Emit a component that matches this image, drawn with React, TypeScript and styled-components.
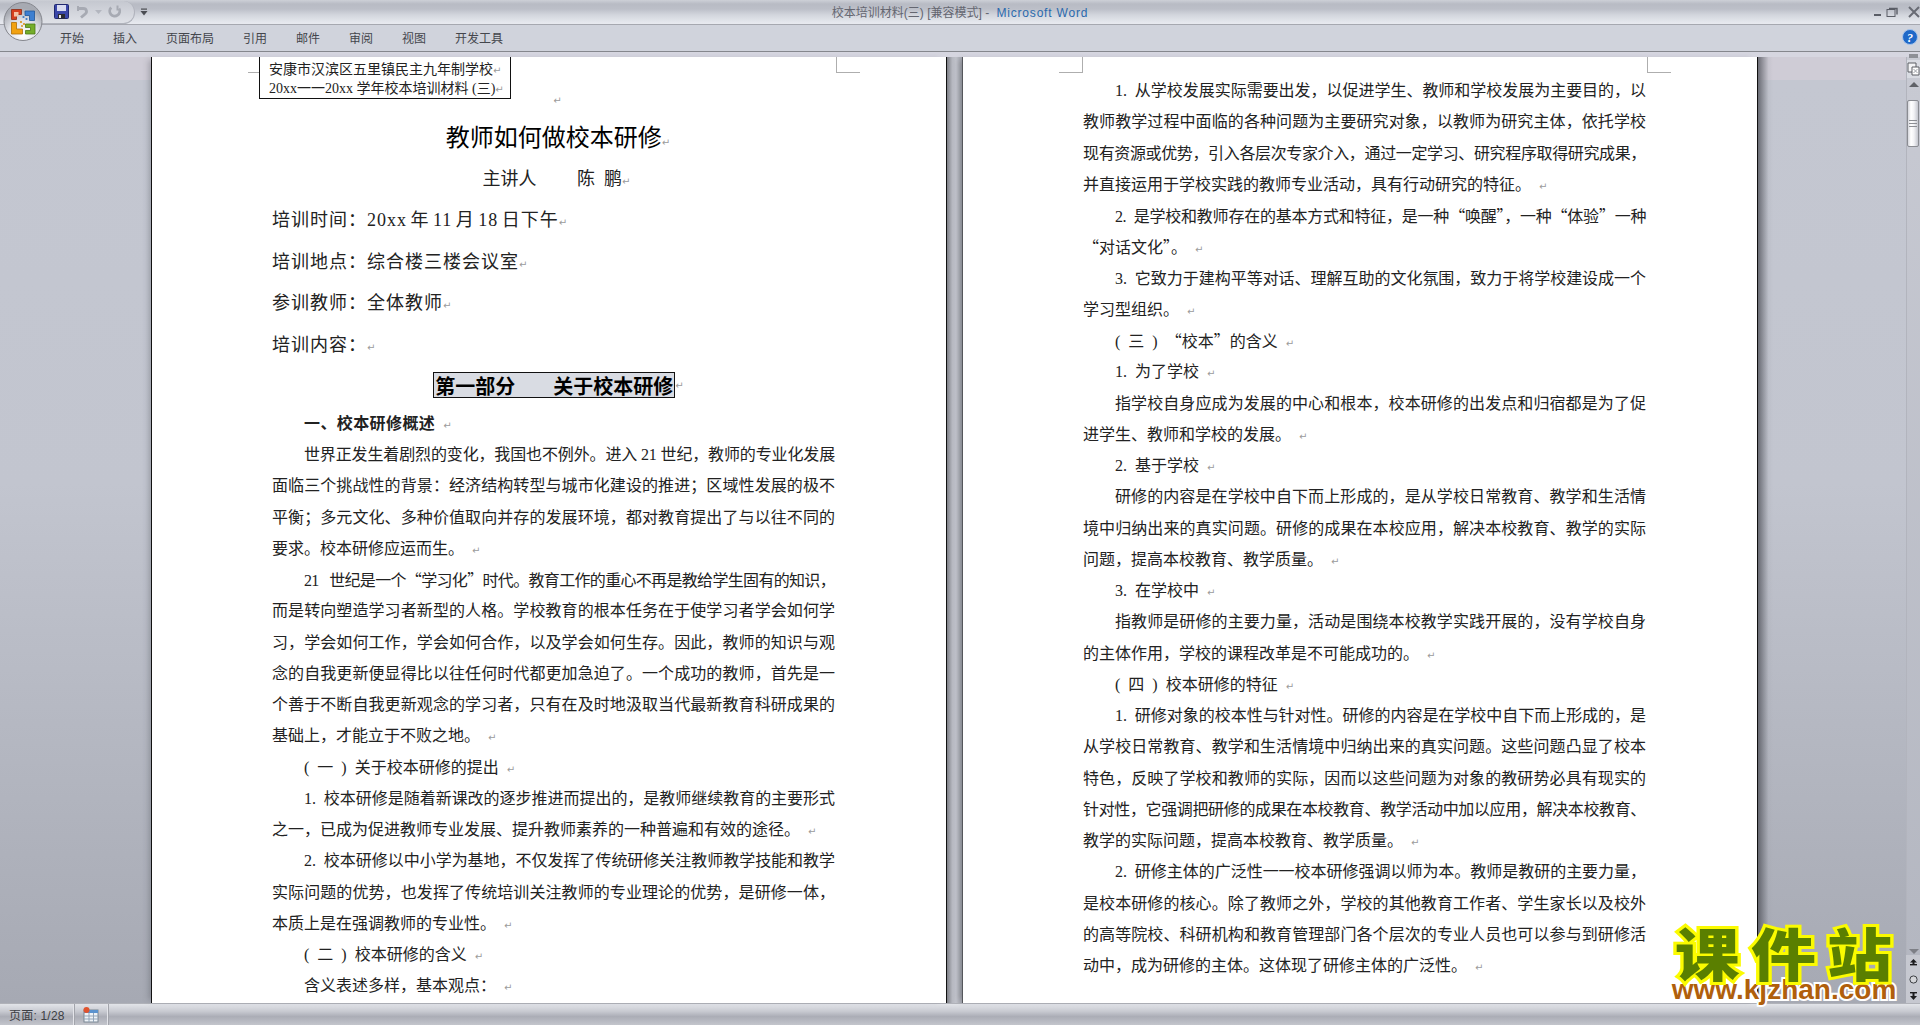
import React from "react";
import styled, { createGlobalStyle } from "styled-components";

const Global = createGlobalStyle`
  html, body { margin: 0; padding: 0; overflow: hidden; background: #c5c8d2; }
  * { box-sizing: border-box; }
`;

const DOC_FONT = `"Liberation Serif", "Noto Sans CJK SC", serif`;
const UI_FONT = `"Liberation Sans", "Noto Sans CJK SC", sans-serif`;

const Shell = styled.div`
  position: relative;
  width: 1920px;
  height: 1025px;
  display: flex;
  flex-direction: column;
  overflow: hidden;
  font-family: ${UI_FONT};
`;

const TitleBar = styled.header`
  flex: 0 0 25px;
  display: grid;
  grid-template-columns: 1fr auto 1fr;
  align-items: center;
  background: linear-gradient(#cdd0d7 0, #b8bbc4 4px, #bcbfc8 9px, #d3d6dd 15px, #e7e9ef 23px);
  border-bottom: 1px solid #a6a8b0;
`;

const QuickAccess = styled.div`
  display: flex;
  align-items: center;
  height: 24px;
  margin-left: 30px;
`;

const QuickPill = styled.div`
  width: 105px;
  height: 23px;
  padding-left: 24px;
  display: flex;
  align-items: center;
  gap: ${(p) => p.$gap}px;
  border: 1px solid #b0b3bc;
  border-left: none;
  border-top: none;
  border-radius: 0 12px 12px 0;
  background: linear-gradient(#c5c8d0, #dfe1e7);
`;

const QuickMore = styled.div`
  margin-left: 5px;
  color: #444;
  line-height: 0;
`;

const WindowTitle = styled.div`
  font-size: 12px;
  color: #646670;
  white-space: nowrap;
  padding-bottom: 2px;
`;

const AppName = styled.span`
  margin-left: 4px;
  color: #2a69ad;
  letter-spacing: 0.8px;
`;

const WindowControls = styled.div`
  display: flex;
  justify-content: flex-end;
  align-items: center;
  height: 24px;
`;

const ControlGap = styled.span`
  width: ${(p) => p.$w}px;
`;

const TabBar = styled.nav`
  flex: 0 0 27px;
  display: flex;
  align-items: center;
  gap: 29px;
  padding: 0 2px 2px 60px;
  background: #d0d3dc;
  border-bottom: 1px solid #85878d;
`;

const Tab = styled.span`
  font-size: 12px;
  color: #44464c;
  white-space: nowrap;
`;

const HelpButton = styled.div`
  margin-left: auto;
  line-height: 0;
`;

const RulerStrip = styled.div`
  flex: 0 0 5px;
  background: #d6d6e0;
`;

const Workspace = styled.main`
  flex: 1 1 auto;
  min-height: 0;
  display: flex;
  padding-left: 151px;
  background: linear-gradient(#cfccd6 0, #cfccd6 23px, #c4c7d1 23px, #c2c5cf 45%, #a6a9b3 100%);
`;

const Page = styled.article`
  position: relative;
  flex: 0 0 796px;
  overflow: hidden;
  background: #fff;
  border-left: 1px solid #111;
  border-right: 1px solid #111;
  padding: ${(p) => p.$top}px 0 0 120px;
  box-shadow: -5px 0 6px -3px rgba(70, 72, 80, 0.35);
`;

const SecondPage = styled(Page)`
  border-left-color: #55575c;
`;

const Gutter = styled.div`
  flex: 0 0 15px;
  background: linear-gradient(90deg, #7d7f86, #b6b8c0 35%, #c2c4cc 60%, #a1a3ab);
`;

const RightShade = styled.div`
  flex: 0 0 15px;
  background: linear-gradient(90deg, rgba(75, 77, 85, 0.75), rgba(150, 152, 160, 0.15) 70%, transparent);
`;

const Filler = styled.div`
  flex: 1 1 auto;
`;

const CropMark = styled.i`
  position: absolute;
  top: 0;
  left: ${(p) => p.$x}px;
  width: 24px;
  height: 16px;
  border-bottom: 1px solid #aeaeae;
  ${(p) => (p.$side === "left" ? "border-right: 1px solid #aeaeae;" : "border-left: 1px solid #aeaeae;")}
`;

const TextBox = styled.div`
  position: absolute;
  top: 0;
  left: 107px;
  width: 252px;
  height: 42px;
  padding: 3px 0 0 9px;
  background: #fff;
  border: 1px solid #111;
  border-top: none;
  font-family: ${DOC_FONT};
  font-size: 14px;
  line-height: 19px;
  font-weight: 400;
  color: #222;
  white-space: nowrap;
`;

const BoxLine = styled.div`
  height: 19px;
`;

const Column = styled.div`
  width: 563px;
  font-family: ${DOC_FONT};
  color: #222;
  font-weight: 400;
`;

const EmptyMark = styled.div`
  height: 20px;
  line-height: 20px;
  text-align: center;
  padding-left: 8px;
`;

const DocTitle = styled.h1`
  margin: 11px 0 0;
  height: 36px;
  font-size: 24px;
  line-height: 36px;
  font-weight: 400;
  text-align: center;
  color: #000;
  padding-left: 9px;
`;

const Speaker = styled.div`
  margin-top: 8px;
  height: 30px;
  font-size: 18px;
  line-height: 30px;
  text-align: center;
  white-space: pre;
  padding-left: 6px;
`;

const InfoList = styled.div`
  margin-top: 6px;
`;

const InfoRow = styled.div`
  height: 41.6px;
  font-size: 18px;
  line-height: 41.6px;
  letter-spacing: 1px;
  word-spacing: -2px;
  white-space: nowrap;
`;

const SectionWrap = styled.div`
  margin: 6px 0 9.5px;
  height: 26px;
  display: flex;
  justify-content: center;
  align-items: center;
  padding-left: 10px;
`;

const SectionBanner = styled.h2`
  margin: 0;
  height: 26px;
  width: 242px;
  padding: 0 1px;
  display: flex;
  justify-content: space-between;
  align-items: center;
  font-size: 20px;
  font-weight: 700;
  background: #d9dce3;
  border: 1px solid #111;
  color: #000;
`;

const Line = styled.div`
  height: 31.25px;
  line-height: 31.25px;
  font-size: 16px;
  white-space: nowrap;
  padding-left: ${(p) => (p.$indent ? 32 : 0)}px;
  letter-spacing: ${(p) => (p.$bold ? 0.4 : p.$squeeze)}px;
  font-weight: ${(p) => (p.$bold ? 700 : 400)};
  text-align: ${(p) => (p.$full ? "justify" : "left")};
  text-align-last: ${(p) => (p.$full ? "justify" : "left")};
`;

const Quote = styled.span`
  font-family: "Noto Sans CJK SC", sans-serif;
`;

const Mark = styled.span`
  margin-left: ${(p) => p.$gap}px;
  font-family: "DejaVu Sans", sans-serif;
  font-size: 10px;
  font-weight: 400;
  letter-spacing: 0;
  color: #9b9b9b;
`;

const ScrollBar = styled.aside`
  flex: 0 0 14px;
  margin-left: 0;
  display: flex;
  flex-direction: column;
  align-items: stretch;
  background: linear-gradient(#c8cad3, #b3b6c0);
  border-left: 1px solid #b2b4bd;
`;

const Grip = styled.div`
  margin: -3px 2px 0;
  height: 4px;
  background: #8d8f96;
`;

const SplitButton = styled.div`
  margin-top: 2px;
  height: 18px;
  display: flex;
  align-items: center;
  justify-content: center;
  background: #d9dbe2;
`;

const ArrowCell = styled.div`
  flex: 0 0 ${(p) => p.$h}px;
  display: flex;
  justify-content: center;
  padding-top: 4px;
`;

const Arrow = styled.i`
  width: 0;
  height: 0;
  border-left: 5px solid transparent;
  border-right: 5px solid transparent;
  ${(p) => (p.$down ? "border-top: 5px solid #7d7f86;" : "border-bottom: 5px solid #5f6167;")}
`;

const Thumb = styled.div`
  flex: 0 0 47px;
  margin-right: 1px;
  display: flex;
  flex-direction: column;
  gap: 2px;
  justify-content: center;
  align-items: center;
  border: 1px solid #8a8c92;
  border-radius: 2px;
  background: linear-gradient(90deg, #d5d6dc, #fff 30%, #f2f2f5 60%, #c4c6ce);
`;

const ThumbLine = styled.b`
  width: 8px;
  height: 1px;
  background: #8c8e94;
`;

const NavGroup = styled.div`
  flex: 0 0 48px;
  display: flex;
  flex-direction: column;
  align-items: center;
  justify-content: space-around;
  margin-left: -1px;
  background: #c6c8d0;
  font-size: 0;
`;

const StatusBar = styled.footer`
  flex: 0 0 22px;
  display: flex;
  align-items: stretch;
  border-top: 1px solid #b0b2b9;
  background: linear-gradient(#e2e4e9 0, #c8cad1 35%, #abadb6 60%, #c3c5cc 100%);
`;

const StatusCell = styled.div`
  flex: 0 0 ${(p) => p.$w}px;
  display: flex;
  align-items: center;
  justify-content: ${(p) => (p.$center ? "center" : "flex-start")};
  padding-left: ${(p) => (p.$center ? 0 : 9)}px;
  border-right: 1px solid #e4e5ea;
  box-shadow: 1px 0 0 #a2a4ab;
  font-size: 12px;
  letter-spacing: 0.2px;
  color: #3d3f44;
`;

const Watermark = styled.div`
  position: absolute;
  left: 1666px;
  top: 925px;
  width: 236px;
  display: flex;
  flex-direction: column;
  align-items: center;
  pointer-events: none;
`;

const WatermarkTitle = styled.div`
  font-family: "Noto Sans CJK SC", sans-serif;
  font-size: 58px;
  height: 53px;
  line-height: 53px;
  font-weight: 900;
  letter-spacing: 10px;
  margin-right: -10px;
  color: #5a7f00;
  -webkit-text-stroke: 6px #fbfb00;
  paint-order: stroke fill;
  white-space: nowrap;
  transform: scale(1.12, 0.98);
`;

const WatermarkUrl = styled.div`
  font-family: "Liberation Sans", sans-serif;
  font-size: 28px;
  height: 24px;
  line-height: 24px;
  font-weight: 700;
  color: #b05f0c;
  -webkit-text-stroke: 4px #fff;
  paint-order: stroke fill;
  white-space: nowrap;
`;

const TABS = ["开始", "插入", "页面布局", "引用", "邮件", "审阅", "视图", "开发工具"];

const PAGE_ONE: string[][] = [
  ["世界正发生着剧烈的变化，我国也不例外。进入 21 世纪，教师的专业化发展", "面临三个挑战性的背景：经济结构转型与城市化建设的推进；区域性发展的极不", "平衡；多元文化、多种价值取向并存的发展环境，都对教育提出了与以往不同的", "要求。校本研修应运而生。↵"],
  ["21\u2002 世纪是一个“学习化”时代。教育工作的重心不再是教给学生固有的知识，", "而是转向塑造学习者新型的人格。学校教育的根本任务在于使学习者学会如何学", "习，学会如何工作，学会如何合作，以及学会如何生存。因此，教师的知识与观", "念的自我更新便显得比以往任何时代都更加急迫了。一个成功的教师，首先是一", "个善于不断自我更新观念的学习者，只有在及时地汲取当代最新教育科研成果的", "基础上，才能立于不败之地。↵"],
  ["(\u2002一\u2002)\u2002关于校本研修的提出↵"],
  ["1.\u2002校本研修是随着新课改的逐步推进而提出的，是教师继续教育的主要形式", "之一，已成为促进教师专业发展、提升教师素养的一种普遍和有效的途径。↵"],
  ["2.\u2002校本研修以中小学为基地，不仅发挥了传统研修关注教师教学技能和教学", "实际问题的优势，也发挥了传统培训关注教师的专业理论的优势，是研修一体，", "本质上是在强调教师的专业性。↵"],
  ["(\u2002二\u2002)\u2002校本研修的含义↵"],
  ["含义表述多样，基本观点：↵"],
];

const PAGE_TWO: string[][] = [
  ["1.\u2002从学校发展实际需要出发，以促进学生、教师和学校发展为主要目的，以", "教师教学过程中面临的各种问题为主要研究对象，以教师为研究主体，依托学校", "现有资源或优势，引入各层次专家介入，通过一定学习、研究程序取得研究成果，", "并直接运用于学校实践的教师专业活动，具有行动研究的特征。↵"],
  ["2.\u2002是学校和教师存在的基本方式和特征，是一种“唤醒”，一种“体验”一种", "“对话文化”。↵"],
  ["3.\u2002它致力于建构平等对话、理解互助的文化氛围，致力于将学校建设成一个", "学习型组织。↵"],
  ["(\u2002三\u2002)\u2002“校本”的含义↵"],
  ["1.\u2002为了学校↵"],
  ["指学校自身应成为发展的中心和根本，校本研修的出发点和归宿都是为了促", "进学生、教师和学校的发展。↵"],
  ["2.\u2002基于学校↵"],
  ["研修的内容是在学校中自下而上形成的，是从学校日常教育、教学和生活情", "境中归纳出来的真实问题。研修的成果在本校应用，解决本校教育、教学的实际", "问题，提高本校教育、教学质量。↵"],
  ["3.\u2002在学校中↵"],
  ["指教师是研修的主要力量，活动是围绕本校教学实践开展的，没有学校自身", "的主体作用，学校的课程改革是不可能成功的。↵"],
  ["(\u2002四\u2002)\u2002校本研修的特征↵"],
  ["1.\u2002研修对象的校本性与针对性。研修的内容是在学校中自下而上形成的，是", "从学校日常教育、教学和生活情境中归纳出来的真实问题。这些问题凸显了校本", "特色，反映了学校和教师的实际，因而以这些问题为对象的教研势必具有现实的", "针对性，它强调把研修的成果在本校教育、教学活动中加以应用，解决本校教育、", "教学的实际问题，提高本校教育、教学质量。↵"],
  ["2.\u2002研修主体的广泛性一一校本研修强调以师为本。教师是教研的主要力量，", "是校本研修的核心。除了教师之外，学校的其他教育工作者、学生家长以及校外", "的高等院校、科研机构和教育管理部门各个层次的专业人员也可以参与到研修活", "动中，成为研修的主体。这体现了研修主体的广泛性。↵"],
];

const COLUMN = 562;

function squeezeFor(text: string, indent: boolean): number {
  let width = 0;
  for (const ch of text) {
    if (ch === " " || ch === ".") width += 4;
    else if (ch === "\u2002" || ch.charCodeAt(0) < 128) width += 8;
    else width += 16;
  }
  const room = COLUMN - (indent ? 32 : 0);
  return Math.min(0, (room - width) / text.length);
}

const withQuotes = (body: string) =>
  body.split(/([“”])/).map((part, i) => (part === "“" || part === "”" ? <Quote key={i}>{part}</Quote> : part));

const TextLine = ({ text, indent, bold }: { text: string; indent?: boolean; bold?: boolean }) => {
  const open = text.endsWith("↵");
  const body = open ? text.slice(0, -1) : text;
  return (
    <Line $indent={indent} $bold={bold} $full={!open} $squeeze={open ? 0 : squeezeFor(body, !!indent)}>
      {withQuotes(body)}
      {open && <Mark $gap={8}>↵</Mark>}
    </Line>
  );
};

const Paragraphs = ({ items }: { items: string[][] }) => (
  <>
    {items.map((para, i) => (
      <section key={i}>
        {para.map((text, j) => (
          <TextLine key={j} text={text} indent={j === 0} />
        ))}
      </section>
    ))}
  </>
);

const OfficeOrb = styled.svg`
  position: absolute;
  left: 2px;
  top: 0;
`;

const Orb = () => (
  <OfficeOrb width="44" height="44" viewBox="0 0 44 44">
    <defs>
      <radialGradient id="orbFill" cx="50%" cy="85%" r="70%">
        <stop offset="0" stopColor="#ffffff" />
        <stop offset="0.55" stopColor="#e0e2e8" />
        <stop offset="1" stopColor="#a7aab2" />
      </radialGradient>
    </defs>
    <circle cx="21" cy="21.5" r="19" fill="url(#orbFill)" stroke="#85878e" strokeWidth="1" />
    <path d="M9.5 9.5h10v5h-5v5h-5z" fill="#d6401f" stroke="#8e2a12" strokeWidth="0.8" />
    <rect x="12" y="12" width="4.5" height="4.5" fill="#f5c3a5" />
    <path d="M23 11h9.5v9.5h-5v-5H23z" fill="#3d7fd0" stroke="#1f5697" strokeWidth="0.8" />
    <path d="M9.5 22.5h5v6.5h6v5h-11z" fill="#f2a211" stroke="#b06f06" strokeWidth="0.8" />
    <path d="M23.500 24h9.500v10h-9.500v-3.500h5v-3h-5z" fill="#74ad2a" stroke="#4b7a14" strokeWidth="0.8" />
    <g fill="#3979c4">
      <circle cx="21.5" cy="17" r="1.1" />
      <circle cx="24.500" cy="19" r="1.1" />
    </g>
    <g fill="#d9931a">
      <circle cx="19" cy="22" r="1.1" />
      <circle cx="22" cy="24" r="1.1" />
      <circle cx="20" cy="26" r="1" />
    </g>
  </OfficeOrb>
);

const SaveIcon = () => (
  <svg width="15" height="15" viewBox="0 0 15 15">
    <rect x="0.5" y="0.5" width="14" height="14" rx="1" fill="#3a46a8" stroke="#20286e" />
    <rect x="3" y="1" width="9" height="6" fill="#d8dbf0" />
    <rect x="4" y="10" width="7" height="4.5" fill="#2b2b30" />
    <rect x="5" y="11" width="2" height="3" fill="#e8e8e8" />
  </svg>
);

const UndoIcon = () => (
  <svg width="14" height="14" viewBox="0 0 14 14" fill="none" stroke="#a7aab3" strokeWidth="2.8">
    <path d="M2 3.500h6.500a3 3 0 0 1 1.500 5.600L6 12.500" />
    <path d="M3 1v5" strokeWidth="2" />
  </svg>
);

const RedoIcon = () => (
  <svg width="14" height="15" viewBox="0 0 14 15" fill="none" stroke="#a7aab3" strokeWidth="2.8">
    <path d="M3.200 3.500a5 5 0 1 0 7.800 1" />
    <path d="M9.500 1.500v5" strokeWidth="2" />
  </svg>
);

const Caret = () => (
  <svg width="7" height="5" viewBox="0 0 7 5">
    <path d="M0 1h7L3.500 5z" fill="#b3b6bf" />
  </svg>
);

const MoreIcon = () => (
  <svg width="8" height="8" viewBox="0 0 8 8" fill="#4a4c52">
    <rect x="1" y="0.5" width="6" height="1.2" />
    <path d="M0.500 3h7L4 7.500z" />
  </svg>
);

const MinimizeIcon = () => (
  <svg width="10" height="10" viewBox="0 0 10 10">
    <rect x="1" y="7" width="7" height="2" fill="#5a5d66" />
  </svg>
);

const RestoreIcon = () => (
  <svg width="12" height="12" viewBox="0 0 12 12" fill="none" stroke="#5a5d66">
    <rect x="1" y="3.500" width="8" height="7" strokeWidth="1" />
    <path d="M3 2.500h8v6" strokeWidth="1.400" />
  </svg>
);

const CloseIcon = () => (
  <svg width="12" height="12" viewBox="0 0 12 12" stroke="#686b74" strokeWidth="2">
    <path d="M1 1l10 10M11 1L1 11" />
  </svg>
);

const HelpIcon = () => (
  <svg width="16" height="16" viewBox="0 0 16 16">
    <circle cx="8" cy="8" r="7.500" fill="#1f68c8" stroke="#a8c4ea" />
    <text x="8" y="12.500" textAnchor="middle" fontSize="12" fontWeight="700" fontFamily="Liberation Serif" fill="#fff" fontStyle="italic">?</text>
  </svg>
);

const SplitIcon = () => (
  <svg width="13" height="14" viewBox="0 0 13 14">
    <path d="M1 1h8v9H1z" fill="#f4f4f6" stroke="#5c5e64" />
    <path d="M5 5h7v8H5z" fill="#fff" stroke="#5c5e64" />
    <path d="M6.500 7l4 4M10.500 7l-4 4" stroke="#9fa1a8" />
  </svg>
);

const PrevIcon = () => (
  <svg width="9" height="9" viewBox="0 0 9 9" fill="#1d1d1f">
    <path d="M4.500 0L8 3.500H1z" />
    <rect x="1" y="5" width="7" height="1.400" />
    <rect x="3.500" y="3" width="2" height="3" />
  </svg>
);

const BrowseIcon = () => (
  <svg width="9" height="9" viewBox="0 0 9 9">
    <circle cx="4.500" cy="4.500" r="3.600" fill="#d5d6da" stroke="#3d3f44" />
  </svg>
);

const NextIcon = () => (
  <svg width="9" height="9" viewBox="0 0 9 9" fill="#1d1d1f">
    <rect x="1" y="1" width="7" height="1.400" />
    <rect x="3.500" y="2" width="2" height="3" />
    <path d="M4.500 9L1 5h7z" />
  </svg>
);

const StatusIcon = () => (
  <svg width="17" height="17" viewBox="0 0 17 17">
    <rect x="2" y="4" width="14" height="12" fill="#eef3f8" stroke="#7b8794" />
    <rect x="2" y="4" width="14" height="3" fill="#5a93cf" />
    <path d="M7 7v9M11.500 7v9M2 10h14M2 13h14" stroke="#93a5b8" />
    <circle cx="4.500" cy="4" r="3" fill="#e0532e" />
  </svg>
);

export default function App() {
  return (
    <Shell>
      <Global />
      <TitleBar>
        <QuickAccess>
          <QuickPill $gap={6}>
            <SaveIcon />
            <UndoIcon />
            <Caret />
            <RedoIcon />
          </QuickPill>
          <QuickMore>
            <MoreIcon />
          </QuickMore>
        </QuickAccess>
        <WindowTitle>
          校本培训材料(三) [兼容模式] - <AppName>Microsoft Word</AppName>
        </WindowTitle>
        <WindowControls>
          <MinimizeIcon />
          <ControlGap $w={3} />
          <RestoreIcon />
          <ControlGap $w={10} />
          <CloseIcon />
        </WindowControls>
      </TitleBar>
      <TabBar>
        {TABS.map((t) => (
          <Tab key={t}>{t}</Tab>
        ))}
        <HelpButton>
          <HelpIcon />
        </HelpButton>
      </TabBar>
      <RulerStrip />
      <Workspace>
        <Page $top={32}>
          <CropMark $side="left" $x={96} />
          <CropMark $side="right" $x={684} />
          <TextBox>
            <BoxLine>
              安康市汉滨区五里镇民主九年制学校<Mark $gap={0}>↵</Mark>
            </BoxLine>
            <BoxLine>
              20xx一一20xx 学年校本培训材料 (三)<Mark $gap={0}>↵</Mark>
            </BoxLine>
          </TextBox>
          <Column>
            <EmptyMark>
              <Mark $gap={0}>↵</Mark>
            </EmptyMark>
            <DocTitle>
              教师如何做校本研修<Mark $gap={0}>↵</Mark>
            </DocTitle>
            <Speaker>
              {"主讲人　　 陈  鹏"}
              <Mark $gap={0}>↵</Mark>
            </Speaker>
            <InfoList>
              <InfoRow>
                培训时间：20xx 年 11 月 18 日下午<Mark $gap={0}>↵</Mark>
              </InfoRow>
              <InfoRow>
                培训地点：综合楼三楼会议室<Mark $gap={0}>↵</Mark>
              </InfoRow>
              <InfoRow>
                参训教师：全体教师<Mark $gap={0}>↵</Mark>
              </InfoRow>
              <InfoRow>
                培训内容：<Mark $gap={0}>↵</Mark>
              </InfoRow>
            </InfoList>
            <SectionWrap>
              <SectionBanner>
                <span>第一部分</span>
                <span>关于校本研修</span>
              </SectionBanner>
              <Mark $gap={0}>↵</Mark>
            </SectionWrap>
            <TextLine text="一、校本研修概述↵" indent bold />
            <Paragraphs items={PAGE_ONE} />
          </Column>
        </Page>
        <Gutter />
        <SecondPage $top={18}>
          <CropMark $side="left" $x={96} />
          <CropMark $side="right" $x={684} />
          <Column>
            <Paragraphs items={PAGE_TWO} />
          </Column>
        </SecondPage>
        <RightShade />
        <Filler />
        <ScrollBar>
          <Grip />
          <SplitButton>
            <SplitIcon />
          </SplitButton>
          <ArrowCell $h={22}>
            <Arrow />
          </ArrowCell>
          <Thumb>
            <ThumbLine />
            <ThumbLine />
            <ThumbLine />
          </Thumb>
          <Filler />
          <ArrowCell $h={10}>
            <Arrow $down />
          </ArrowCell>
          <NavGroup>
            <PrevIcon />
            <BrowseIcon />
            <NextIcon />
          </NavGroup>
        </ScrollBar>
      </Workspace>
      <StatusBar>
        <StatusCell $w={74}>页面: 1/28</StatusCell>
        <StatusCell $w={34} $center>
          <StatusIcon />
        </StatusCell>
      </StatusBar>
      <Orb />
      <Watermark>
        <WatermarkTitle>课件站</WatermarkTitle>
        <WatermarkUrl>www.kjzhan.com</WatermarkUrl>
      </Watermark>
    </Shell>
  );
}
